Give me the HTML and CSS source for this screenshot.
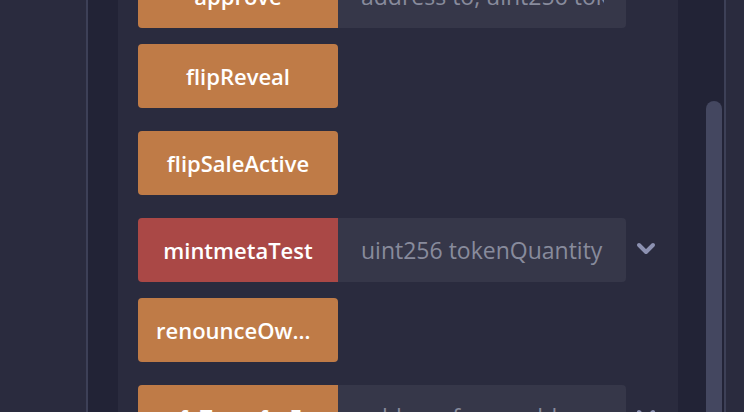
FILE: index.html
```html
<!DOCTYPE html>
<html>
<head>
<meta charset="utf-8">
<link rel="stylesheet" href="styles.css">
</head>
<body>
<div class="app">
  <div class="side"></div>
  <div class="divider"></div>
  <div class="gutter"></div>
  <div class="card">
    <div class="list">
      <div class="row input-row">
        <button class="fn warn joined">approve</button>
        <input class="args" placeholder="address to, uint256 tokenId">
        <span class="chev"><svg width="20" height="13" viewBox="0 0 20 13"><path d="M3 3 L10 10 L17 3" fill="none" stroke="#8c91b1" stroke-width="4" stroke-linecap="round" stroke-linejoin="round"/></svg></span>
      </div>
      <div class="row">
        <button class="fn warn">flipReveal</button>
      </div>
      <div class="row">
        <button class="fn warn">flipSaleActive</button>
      </div>
      <div class="row input-row">
        <button class="fn danger joined">mintmetaTest</button>
        <input class="args" placeholder="uint256 tokenQuantity">
        <span class="chev"><svg width="20" height="13" viewBox="0 0 20 13"><path d="M3 3 L10 10 L17 3" fill="none" stroke="#8c91b1" stroke-width="4" stroke-linecap="round" stroke-linejoin="round"/></svg></span>
      </div>
      <div class="row">
        <button class="fn warn">renounceOwnership</button>
      </div>
      <div class="row input-row">
        <button class="fn warn joined">safeTransferFrom</button>
        <input class="args" placeholder="address from, address to, uint256 tokenId">
        <span class="chev"><svg width="20" height="13" viewBox="0 0 20 13"><path d="M3 3 L10 10 L17 3" fill="none" stroke="#8c91b1" stroke-width="4" stroke-linecap="round" stroke-linejoin="round"/></svg></span>
      </div>
    </div>
  </div>
  <div class="rail">
    <div class="thumb"></div>
  </div>
  <div class="rail-line"></div>
  <div class="edge"></div>
</div>
</body>
</html>
```
FILE: styles.css
```css
html, body {
  margin: 0;
  padding: 0;
  background: #2a2b3e;
  font-family: "Open Sans", Lato, sans-serif;
}
.app {
  display: flex;
  width: 744px;
  height: 412px;
  overflow: hidden;
}
.side {
  width: 86px;
  background: #2a2b3e;
}
.divider {
  width: 2px;
  background: #3d4057;
}
.gutter {
  width: 30px;
  background: #222336;
}
.card {
  width: 540px;
  padding-left: 20px;
  background: #2a2b3e;
  overflow: hidden;
}
.list {
  margin-top: -36px;
  display: flex;
  flex-direction: column;
}
.row {
  display: flex;
  align-items: center;
  height: 64px;
  margin-bottom: 23px;
}
.row.input-row {
  margin-bottom: 16px;
}
.fn {
  width: 200px;
  height: 64px;
  flex: none;
  border: none;
  border-radius: 4px;
  padding: 0 18px;
  color: #ffffff;
  font-family: "Open Sans", Lato, sans-serif;
  font-weight: 600;
  font-size: 22px;
  text-align: center;
  white-space: nowrap;
  overflow: hidden;
  text-overflow: ellipsis;
}
.fn.joined {
  border-radius: 4px 0 0 4px;
}
.warn {
  background: #bf7b47;
}
.danger {
  background: #aa4846;
}
.args {
  width: 288px;
  height: 64px;
  box-sizing: border-box;
  flex: none;
  border: none;
  border-radius: 0 4px 4px 0;
  background: #363749;
  padding: 0 22px 0 23px;
  font-family: "Open Sans", Lato, sans-serif;
  font-size: 23px;
  color: #d0d2dc;
  outline: none;
}
.args::placeholder {
  color: #888b9c;
}
.chev {
  width: 40px;
  display: flex;
  justify-content: center;
  align-items: center;
  margin-top: -4px;
}
.rail {
  width: 46px;
  background: #222336;
  padding-left: 28px;
  box-sizing: border-box;
}
.thumb {
  width: 16px;
  height: 340px;
  margin-top: 101px;
  border-radius: 8px 8px 0 0;
  background: #444760;
}
.rail-line {
  width: 2px;
  background: #3d4057;
}
.edge {
  flex: 1;
  background: #2a2b3e;
}
```
